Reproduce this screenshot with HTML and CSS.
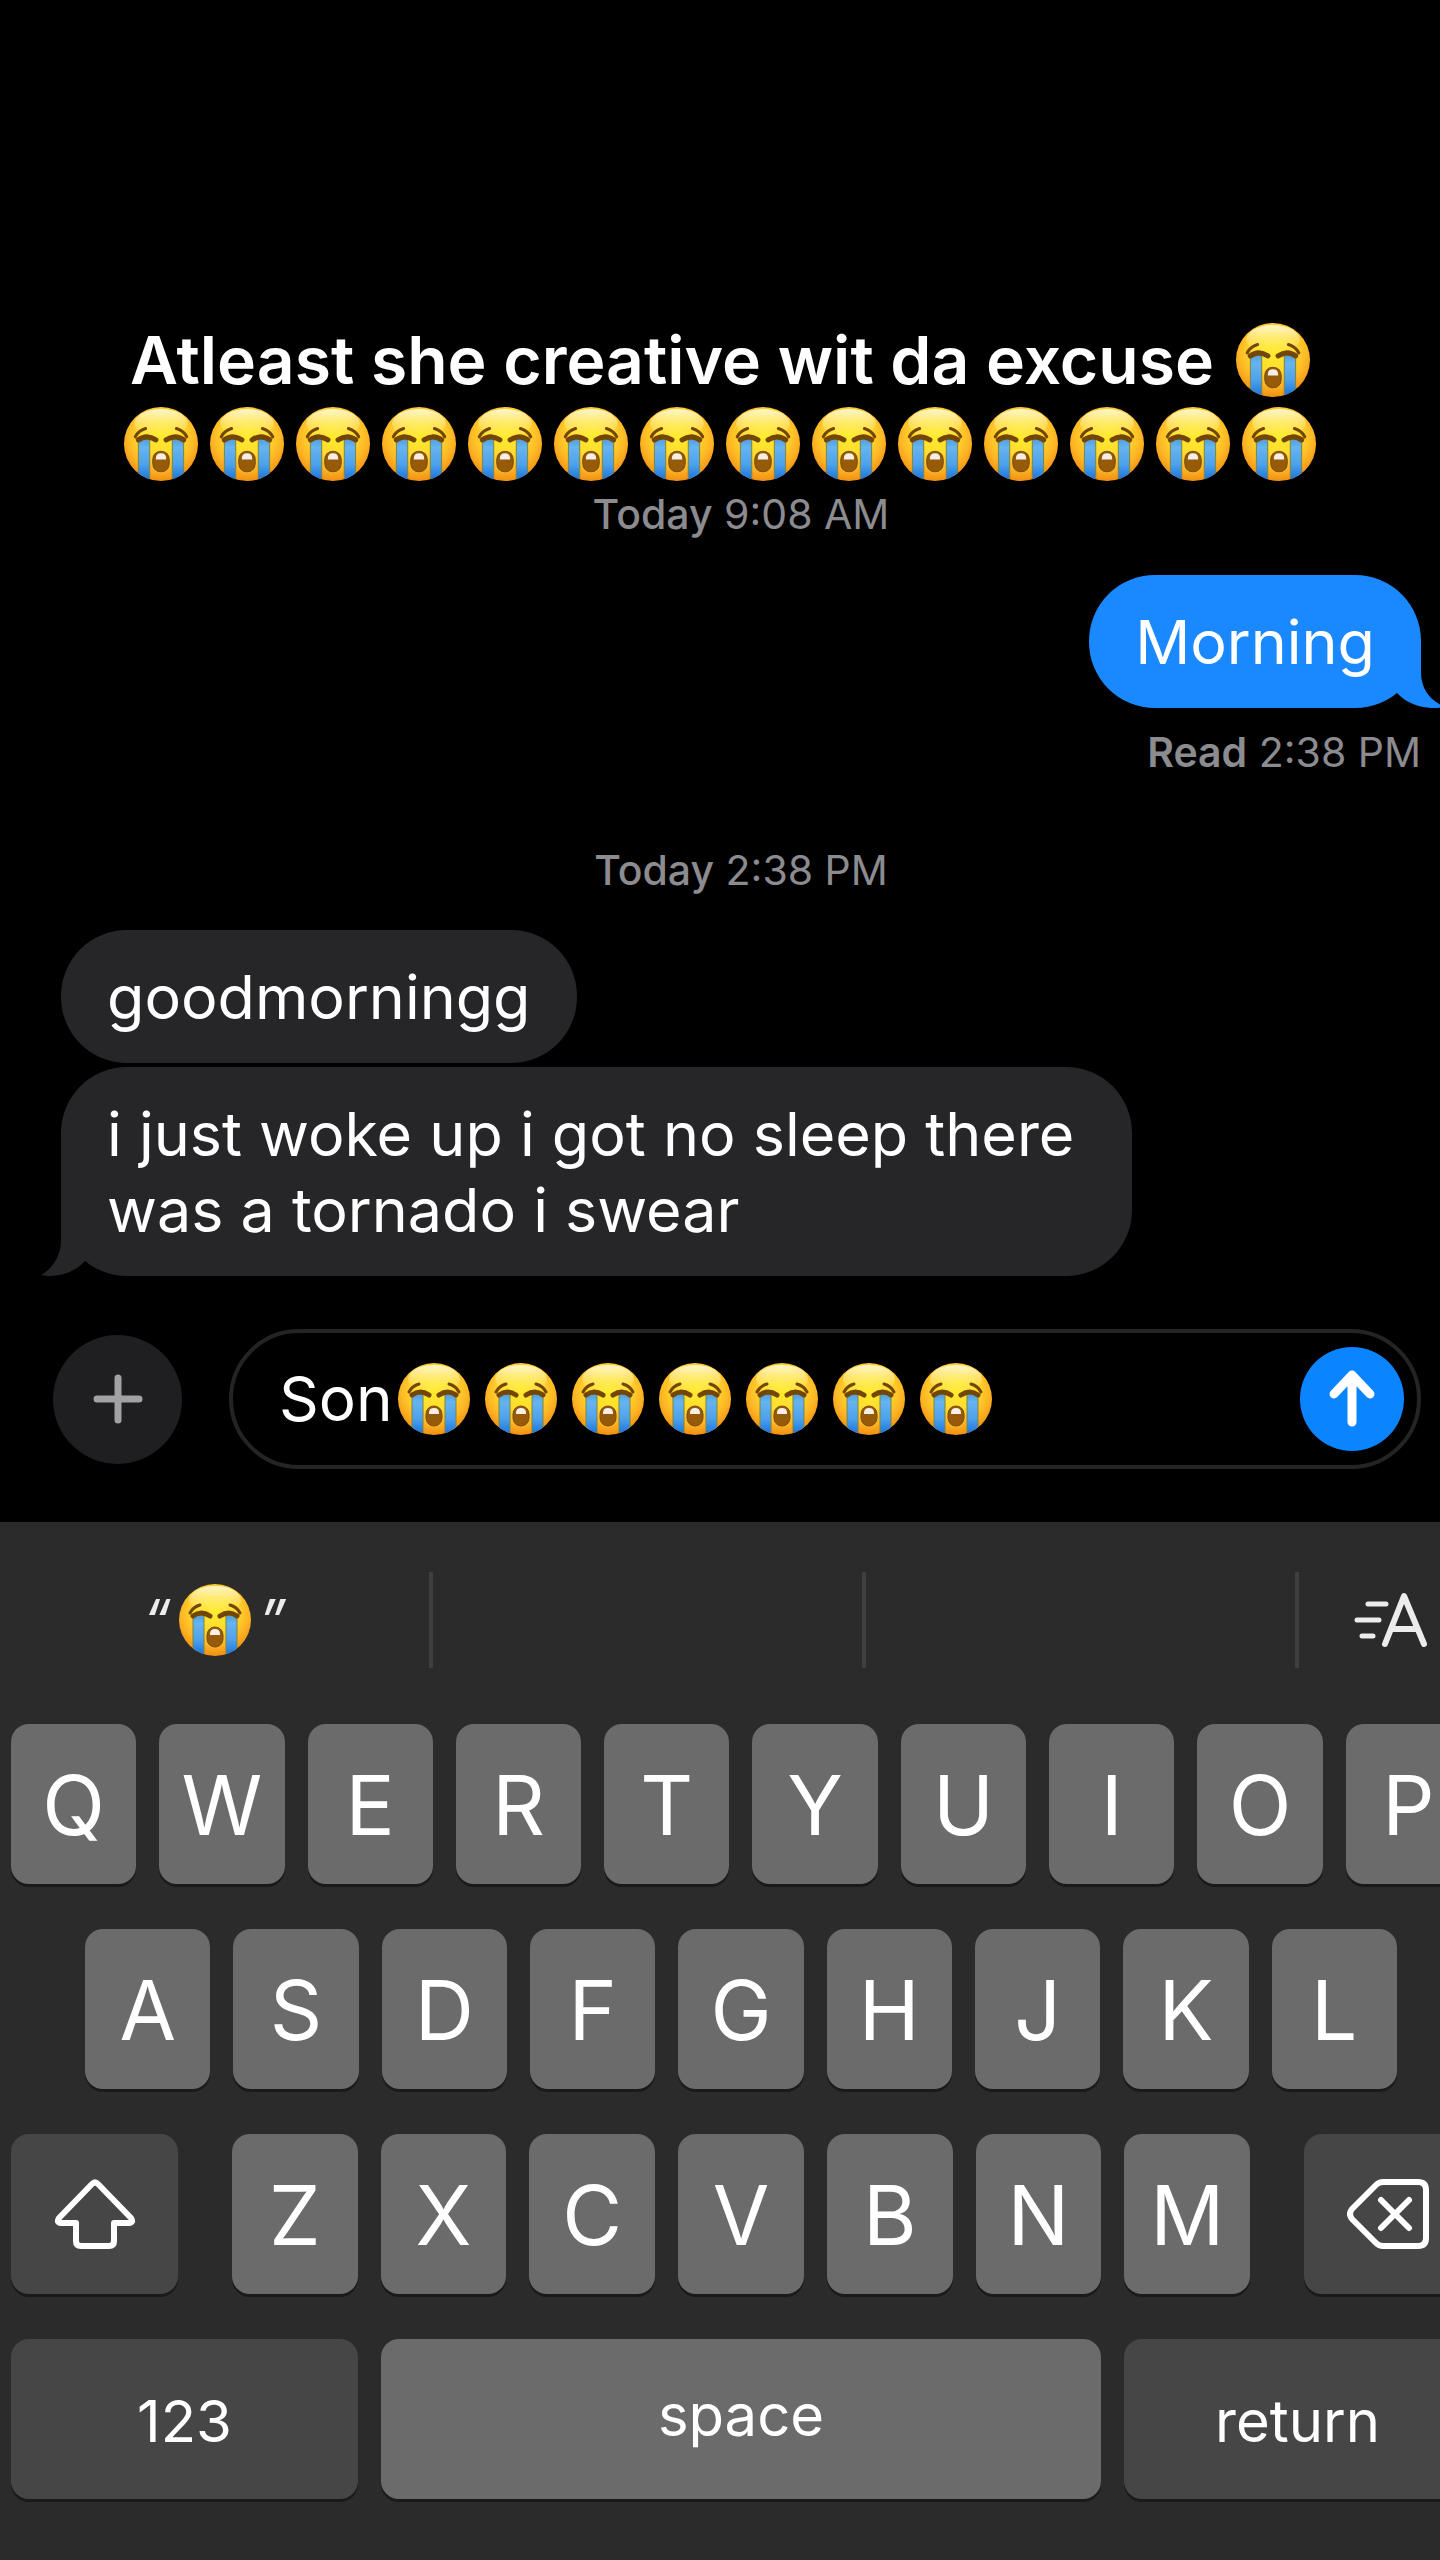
FILE: index.html
```html
<!DOCTYPE html>
<html lang="en">
<head>
<meta charset="utf-8">
<meta name="viewport" content="width=device-width, initial-scale=1">
<title>Messages</title>
<link rel="stylesheet" href="styles.css">
</head>
<body>
<svg class="defs" aria-hidden="true">
  <defs>
    <radialGradient id="face" cx="50%" cy="38%" r="63%">
      <stop offset="0" stop-color="#ffec2e"/>
      <stop offset="0.45" stop-color="#ffdb2e"/>
      <stop offset="0.75" stop-color="#fdb524"/>
      <stop offset="1" stop-color="#f08c12"/>
    </radialGradient>
    <linearGradient id="shine" x1="0" y1="0" x2="0" y2="1">
      <stop offset="0" stop-color="#fffbe0" stop-opacity="0.9"/>
      <stop offset="1" stop-color="#fff27a" stop-opacity="0"/>
    </linearGradient>
    <linearGradient id="tear" x1="0" y1="0" x2="0" y2="1">
      <stop offset="0" stop-color="#4f9fdc"/>
      <stop offset="0.2" stop-color="#66b4f0"/>
      <stop offset="0.6" stop-color="#4da2ec"/>
      <stop offset="1" stop-color="#1670dc"/>
    </linearGradient>
    <clipPath id="disc"><circle cx="36" cy="36" r="36"/></clipPath>
  </defs>
  <symbol id="sob" viewBox="0 0 72 72">
    <circle cx="36" cy="36" r="36" fill="url(#face)"/>
    <ellipse cx="36" cy="16" rx="26" ry="14" fill="url(#shine)"/>
    <g clip-path="url(#disc)">
      <rect x="14" y="31" width="11" height="41" fill="url(#tear)" stroke="#7d8440" stroke-width="1"/>
      <rect x="47" y="31" width="11" height="41" fill="url(#tear)" stroke="#7d8440" stroke-width="1"/>
    </g>
    <g fill="none" stroke="#744605" stroke-linecap="round">
      <path d="M11 29Q14 23 21 21M61 29Q58 23 51 21" stroke-width="3"/>
      <path d="M14 32Q22 26 31 32M41 32Q50 26 58 32" stroke-width="5"/>
    </g>
    <rect x="28" y="43" width="16" height="20" rx="8" fill="#965a08" stroke="#7d4f0c" stroke-width="1"/>
    <path d="M31 51V50Q31 45 36 45Q41 45 41 50V51Z" fill="#f6efe6"/>
  </symbol>
</svg>

<div class="screen">
  <h1 class="caption">
    <span class="caption-line">Atleast she creative wit da excuse <svg class="emoji" role="img" aria-label="sobbing face"><use href="#sob"/></svg></span>
    <span class="caption-line emoji-row">
      <svg class="emoji"><use href="#sob"/></svg><svg class="emoji"><use href="#sob"/></svg><svg class="emoji"><use href="#sob"/></svg><svg class="emoji"><use href="#sob"/></svg><svg class="emoji"><use href="#sob"/></svg><svg class="emoji"><use href="#sob"/></svg><svg class="emoji"><use href="#sob"/></svg><svg class="emoji"><use href="#sob"/></svg><svg class="emoji"><use href="#sob"/></svg><svg class="emoji"><use href="#sob"/></svg><svg class="emoji"><use href="#sob"/></svg><svg class="emoji"><use href="#sob"/></svg><svg class="emoji"><use href="#sob"/></svg><svg class="emoji"><use href="#sob"/></svg>
    </span>
  </h1>

  <div class="device">
    <main class="thread">
      <p class="stamp"><b>Today</b> 9:08 AM</p>
      <div class="bubble sent">Morning<svg class="tail" viewBox="0 0 60 70" aria-hidden="true"><path d="M36 0V34C36 50 44 62 60 69C42 72 24 68 12 55L0 30Z"/></svg></div>
      <p class="stamp receipt"><b>Read</b> 2:38 PM</p>
      <p class="stamp later"><b>Today</b> 2:38 PM</p>
      <div class="bubble received">goodmorningg</div>
      <div class="bubble received last">i just woke up i got no sleep there<br>was a tornado i swear<svg class="tail" viewBox="0 0 60 70" aria-hidden="true"><path d="M36 0V34C36 50 44 62 56 69C42 72 24 68 12 55L0 30Z"/></svg></div>
    </main>

    <form class="composer">
      <button class="add" type="button" aria-label="Add attachment">
        <svg width="50" height="50" viewBox="0 0 50 50"><path d="M25 4V46M4 25H46"/></svg>
      </button>
      <div class="field">
        <input class="message" type="text" value="Son" aria-label="Message">
        <span class="typed">
          <svg class="emoji"><use href="#sob"/></svg><svg class="emoji"><use href="#sob"/></svg><svg class="emoji"><use href="#sob"/></svg><svg class="emoji"><use href="#sob"/></svg><svg class="emoji"><use href="#sob"/></svg><svg class="emoji"><use href="#sob"/></svg><svg class="emoji"><use href="#sob"/></svg>
        </span>
        <button class="send" type="button" aria-label="Send">
          <svg width="50" height="60" viewBox="0 0 50 60"><path d="M25 6V53M7 25L25 6L43 25"/></svg>
        </button>
      </div>
    </form>

    <section class="keyboard" aria-label="Keyboard">
      <div class="suggestions">
        <button class="suggestion" type="button"><i>“</i><svg class="emoji"><use href="#sob"/></svg><i>”</i></button>
        <button class="suggestion" type="button" aria-label="Empty suggestion"></button>
        <button class="suggestion" type="button" aria-label="Empty suggestion"></button>
        <button class="format" type="button" aria-label="Text effects">
          <svg width="74" height="56" viewBox="0 0 74 56"><path d="M14 12H32M3 28H25M8 44H19" stroke-width="5"/><path d="M31 52L50 4L70 52M38 37H63" stroke-width="6"/></svg>
        </button>
      </div>
      <div class="row">
        <button class="key">Q</button><button class="key">W</button><button class="key">E</button><button class="key">R</button><button class="key">T</button><button class="key">Y</button><button class="key">U</button><button class="key">I</button><button class="key">O</button><button class="key">P</button>
      </div>
      <div class="row middle">
        <button class="key">A</button><button class="key">S</button><button class="key">D</button><button class="key">F</button><button class="key">G</button><button class="key">H</button><button class="key">J</button><button class="key">K</button><button class="key">L</button>
      </div>
      <div class="row lower">
        <button class="key dark" aria-label="Shift">
          <svg width="82" height="70" viewBox="0 0 82 70"><path d="M38 5Q41 2 44 5L77 39Q80 44 75 44H60V62Q60 67 55 67H27Q22 67 22 62V44H7Q2 44 5 39Z"/></svg>
        </button>
        <div class="row letters">
          <button class="key">Z</button><button class="key">X</button><button class="key">C</button><button class="key">V</button><button class="key">B</button><button class="key">N</button><button class="key">M</button>
        </div>
        <button class="key dark" aria-label="Delete">
          <svg width="82" height="70" viewBox="0 0 82 70"><path d="M29 6Q32 3 36 3H71Q79 3 79 11V59Q79 67 71 67H36Q32 67 29 64L5 40Q1 35 5 30Z"/><path d="M34 21L62 49M62 21L34 49"/></svg>
        </button>
      </div>
      <div class="row bottom">
        <button class="key dark word">123</button>
        <button class="key word space">space</button>
        <button class="key dark word">return</button>
      </div>
    </section>
  </div>
</div>
</body>
</html>
```
FILE: styles.css
```css
* {
  box-sizing: border-box;
}

body {
  margin: 0;
  background: #000;
  color: #fff;
  font-family: Inter, "Liberation Sans", sans-serif;
}

button {
  border: 0;
  padding: 0;
  color: inherit;
  font: inherit;
}

svg {
  display: block;
  flex: none;
}

.defs {
  position: absolute;
  width: 0;
  height: 0;
}

.screen {
  min-height: 100vh;
  overflow: hidden;
  padding-top: 318px;
}

/* The device canvas runs a little past the right edge of the window. */
.device {
  width: calc(100% + 42px);
}

.emoji {
  width: 72px;
  height: 72px;
}

.caption {
  margin: 0;
  font-size: 66px;
  font-weight: 600;
  line-height: 84px;
}

.caption-line {
  display: flex;
  align-items: center;
  justify-content: center;
  gap: 22px;
  height: 84px;
  white-space: nowrap;
}

.caption .emoji {
  width: 74px;
  height: 74px;
}

.caption .emoji-row {
  gap: 12px;
}

.thread {
  display: flex;
  flex-direction: column;
  align-items: flex-start;
  padding: 0 61px 53px;
}

.stamp {
  align-self: center;
  margin: 0 0 33px;
  color: #8b8b90;
  font-size: 41px;
  line-height: 56px;
}

.stamp b {
  font-weight: 500;
}

.receipt {
  align-self: flex-end;
  margin: 16px 0 62px;
}

.receipt b {
  font-weight: 600;
}

.later {
  margin-bottom: 32px;
}

.bubble {
  position: relative;
  padding: 29px 46px 28px;
  border-radius: 66px;
  font-size: 61px;
  line-height: 76px;
}

.sent {
  align-self: flex-end;
  background: #1a88ff;
  color: #fff;
}

.received {
  background: #262628;
}

.last {
  margin-top: 4px;
  padding-right: 58px;
}

.tail {
  position: absolute;
  right: -24px;
  bottom: 0;
  width: 60px;
  height: 70px;
  fill: #1a88ff;
}

.received .tail {
  right: auto;
  left: -24px;
  fill: #262628;
  transform: scaleX(-1);
}

.composer {
  display: flex;
  align-items: center;
  gap: 47px;
  padding: 0 61px 53px 53px;
}

.add {
  display: grid;
  place-items: center;
  flex: none;
  width: 129px;
  height: 129px;
  border-radius: 50%;
  background: #1f1f21;
}

.add svg {
  fill: none;
  stroke: #a2a2a4;
  stroke-width: 7;
  stroke-linecap: round;
}

.field {
  display: flex;
  flex: 1;
  align-items: center;
  height: 140px;
  padding: 0 13px 0 46px;
  border: 4px solid #242426;
  border-radius: 70px;
}

.message {
  width: 119px;
  height: 76px;
  padding: 0;
  border: 0;
  outline: 0;
  background: none;
  color: #fff;
  font: 400 62px/76px Inter, "Liberation Sans", sans-serif;
}

.typed {
  display: flex;
  gap: 15px;
}

.send {
  display: grid;
  place-items: center;
  flex: none;
  width: 104px;
  height: 104px;
  margin-left: auto;
  border-radius: 50%;
  background: #0b84ff;
}

.send svg {
  fill: none;
  stroke: #fff;
  stroke-width: 9;
  stroke-linecap: round;
  stroke-linejoin: round;
}

.keyboard {
  display: flex;
  flex-direction: column;
  gap: 45px;
  padding: 50px 11px 61px;
  background: #2b2b2b;
}

.suggestions {
  display: flex;
  height: 96px;
  margin: 0 -11px 11px;
}

.suggestion {
  display: flex;
  flex: 0 0 433px;
  align-items: center;
  justify-content: center;
  gap: 8px;
  border-right: 4px solid #3f3f40;
  background: none;
  color: #ececec;
  font-size: 58px;
}

.format {
  display: grid;
  place-items: center;
  flex: 1;
  background: none;
}

.format svg {
  fill: none;
  stroke: #ececec;
  stroke-linecap: round;
  stroke-linejoin: round;
}

.row {
  display: flex;
  gap: 23px;
}

.middle {
  padding: 0 74px;
}

.lower {
  gap: 54px;
}

.letters {
  flex: 1;
}

.key {
  display: flex;
  flex: 1 1 0;
  align-items: center;
  justify-content: center;
  height: 160px;
  padding-top: 4px;
  border-radius: 18px;
  background: #6b6b6b;
  box-shadow: 0 3px 0 #1a1a1a;
  font-size: 82px;
  line-height: 100px;
}

.dark {
  background: #464646;
}

.lower > .key {
  flex: 0 0 167px;
  padding: 0;
}

.key svg {
  fill: none;
  stroke: #fff;
  stroke-width: 6;
  stroke-linecap: round;
  stroke-linejoin: round;
}

.bottom .dark {
  flex: 0 0 347px;
}

.word {
  font-size: 58px;
}

.space {
  padding: 0 0 8px;
}
```
